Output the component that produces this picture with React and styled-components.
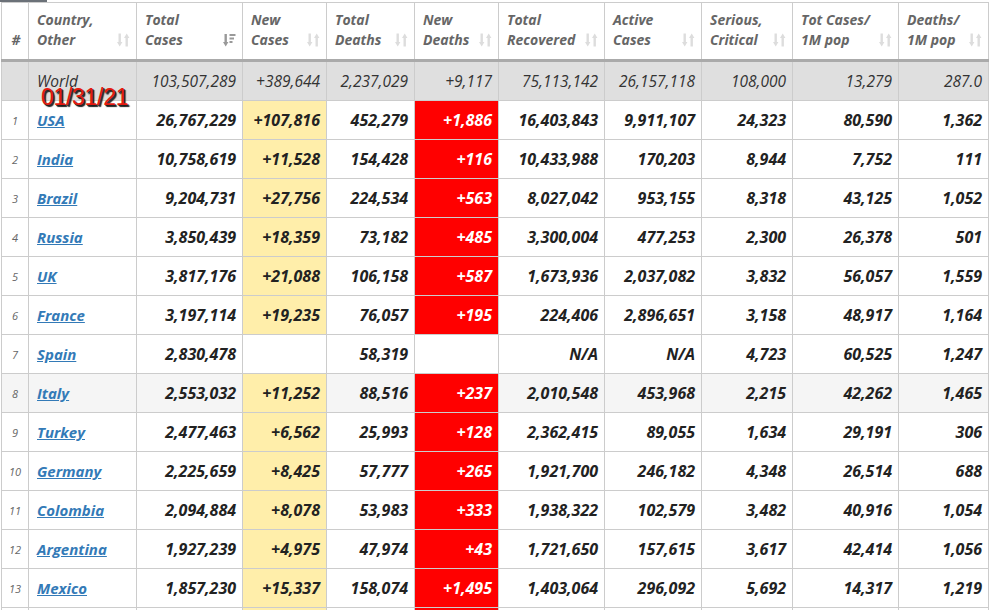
import React from 'react';
import styled, { createGlobalStyle } from 'styled-components';

const GlobalStyle = createGlobalStyle`
html, body {
  margin: 0;
  padding: 0;
  background: #fff;
  overflow: hidden;
}
body {
  font-family: "Open Sans", "Noto Sans", sans-serif;
}
`

const Page = styled.div`
position: relative;
width: 990px;
height: 610px;
overflow: hidden;
`
const Tab = styled.div`
width: 47px;
height: 2px;
background: #6b7178;
`
const Table = styled.table`
border-collapse: collapse;
table-layout: fixed;
margin-left: 1px;
width: 988px;
font-style: italic;
`
const Th = styled.th`
border: 1px solid #ccc;
border-bottom: 3px solid #aaa;
height: 47px;
padding: 0 6px 9px 8px;
vertical-align: bottom;
text-align: ${p => p.$center ? 'center' : 'left'};
color: #666;
font-size: 14px;
font-weight: 700;
line-height: 20px;
`
const HeadInner = styled.div`
display: flex;
align-items: flex-end;
justify-content: space-between;
`
const Tr = styled.tr`
background: ${p => p.$world ? '#dfdfdf' : p.$shade ? '#f5f5f5' : '#fff'};
`
const Td = styled.td`
border: 1px solid #ccc;
height: 38px;
padding: 0 6px 0 4px;
text-align: right;
font-size: ${p => p.$world ? '15.5px' : '16px'};
font-weight: ${p => p.$world ? 400 : 700};
color: ${p => p.$tone === 'red' ? '#fff' : p.$world ? '#333' : '#222'};
background: ${p => p.$tone === 'yellow' ? '#ffeeaa' : p.$tone === 'red' ? '#ff0000' : 'transparent'};
white-space: nowrap;
`
const NumTd = styled.td`
border: 1px solid #ccc;
text-align: center;
font-size: 11px;
color: #666;
padding: 0;
`
const CountryTd = styled.td`
border: 1px solid #ccc;
text-align: left;
padding: 0 4px 0 8px;
font-size: ${p => p.$world ? '15.5px' : '15px'};
font-weight: ${p => p.$world ? 400 : 700};
color: #333;
vertical-align: ${p => p.$world ? 'top' : 'middle'};
padding-top: ${p => p.$world ? '8px' : '0'};
`
const CountryLink = styled.a`
color: #337ab7;
text-decoration: underline;
`
const DateStamp = styled.div`
position: absolute;
left: 41px;
top: 84px;
font-family: "Liberation Sans", Arial, sans-serif;
font-size: 23px;
color: #e41a10;
text-shadow: 2px 2px 1px #1f1f1f, 1px 1px 0 #333;
letter-spacing: -0.3px;
pointer-events: none;
`

const SortIcon = ({active}) => (
  <svg width="13" height="14" viewBox="0 0 13 14" style={{flexShrink: 0, marginBottom: 3}}>
    {active ? (
      <g fill="#999">
        <rect x="1.5" y="1" width="2.4" height="9" />
        <polygon points="0,9 5.4,9 2.7,13.5" />
        <rect x="6.5" y="1" width="6" height="2" />
        <rect x="6.5" y="4.5" width="4.5" height="2" />
        <rect x="6.5" y="8" width="3" height="2" />
      </g>
    ) : (
      <g fill="#ddd">
        <rect x="1.5" y="0.5" width="2.4" height="9" />
        <polygon points="0,9 5.4,9 2.7,13.5" />
        <rect x="8.5" y="4.5" width="2.4" height="9" />
        <polygon points="7,5 12.4,5 9.7,0.5" />
      </g>
    )}
  </svg>
)

const headers = [
  ['Country,', 'Other'],
  ['Total', 'Cases', true],
  ['New', 'Cases'],
  ['Total', 'Deaths'],
  ['New', 'Deaths'],
  ['Total', 'Recovered'],
  ['Active', 'Cases'],
  ['Serious,', 'Critical'],
  ['Tot Cases/', '1M pop'],
  ['Deaths/', '1M pop'],
]
const widths = [27, 108, 106, 84, 88, 84, 106, 97, 91, 106, 90]

const world = ['World', '103,507,289', '+389,644', '2,237,029', '+9,117', '75,113,142', '26,157,118', '108,000', '13,279', '287.0']

const rows = [
  ['USA', '26,767,229', '+107,816', '452,279', '+1,886', '16,403,843', '9,911,107', '24,323', '80,590', '1,362'],
  ['India', '10,758,619', '+11,528', '154,428', '+116', '10,433,988', '170,203', '8,944', '7,752', '111'],
  ['Brazil', '9,204,731', '+27,756', '224,534', '+563', '8,027,042', '953,155', '8,318', '43,125', '1,052'],
  ['Russia', '3,850,439', '+18,359', '73,182', '+485', '3,300,004', '477,253', '2,300', '26,378', '501'],
  ['UK', '3,817,176', '+21,088', '106,158', '+587', '1,673,936', '2,037,082', '3,832', '56,057', '1,559'],
  ['France', '3,197,114', '+19,235', '76,057', '+195', '224,406', '2,896,651', '3,158', '48,917', '1,164'],
  ['Spain', '2,830,478', '', '58,319', '', 'N/A', 'N/A', '4,723', '60,525', '1,247'],
  ['Italy', '2,553,032', '+11,252', '88,516', '+237', '2,010,548', '453,968', '2,215', '42,262', '1,465'],
  ['Turkey', '2,477,463', '+6,562', '25,993', '+128', '2,362,415', '89,055', '1,634', '29,191', '306'],
  ['Germany', '2,225,659', '+8,425', '57,777', '+265', '1,921,700', '246,182', '4,348', '26,514', '688'],
  ['Colombia', '2,094,884', '+8,078', '53,983', '+333', '1,938,322', '102,579', '3,482', '40,916', '1,054'],
  ['Argentina', '1,927,239', '+4,975', '47,974', '+43', '1,721,650', '157,615', '3,617', '42,414', '1,056'],
  ['Mexico', '1,857,230', '+15,337', '158,074', '+1,495', '1,403,064', '296,092', '5,692', '14,317', '1,219'],
  ['Poland', '1,517,750', '+4,196', '37,135', '+43', '1,300,432', '180,183', '1,588', '40,117', '982'],
]

const toneFor = (col, value) => {
  if (!value) return undefined
  if (col === 2) return 'yellow'
  if (col === 4) return 'red'
  return undefined
}

function App() {
  return (
    <Page>
      <GlobalStyle />
      <Tab />
      <Table>
        <colgroup>
          {widths.map((w, i) => <col key={i} style={{width: w}} />)}
        </colgroup>
        <thead>
          <tr>
            <Th $center>#</Th>
            {headers.map(([a, b, active], i) => (
              <Th key={i}>
                <HeadInner>
                  <span>{a}<br />{b}</span>
                  <SortIcon active={active} />
                </HeadInner>
              </Th>
            ))}
          </tr>
        </thead>
        <tbody>
          <Tr $world>
            <NumTd />
            <CountryTd $world>{world[0]}</CountryTd>
            {world.slice(1).map((v, i) => <Td key={i} $world>{v}</Td>)}
          </Tr>
          {rows.map((r, idx) => (
            <Tr key={r[0]} $shade={r[0] === 'Italy'}>
              <NumTd>{idx + 1}</NumTd>
              <CountryTd><CountryLink href="#">{r[0]}</CountryLink></CountryTd>
              {r.slice(1).map((v, i) => (
                <Td key={i} $tone={toneFor(i + 1, v)}>{v}</Td>
              ))}
            </Tr>
          ))}
        </tbody>
      </Table>
      <DateStamp>01/31/21</DateStamp>
    </Page>
  );
}

export default App;
